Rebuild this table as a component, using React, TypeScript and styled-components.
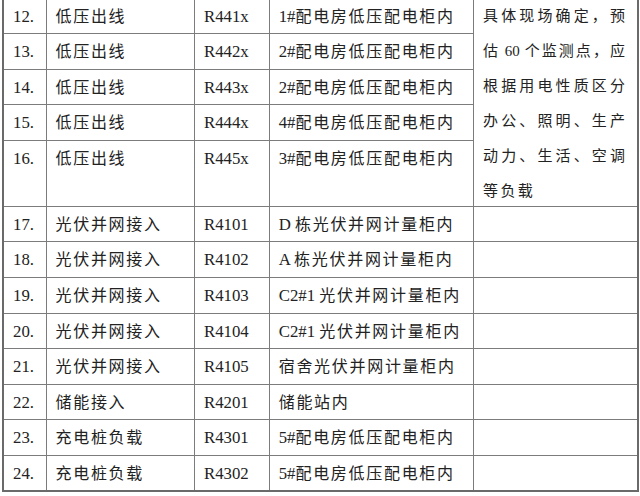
import React from "react";
import styled, { createGlobalStyle } from "styled-components";

const GlobalStyle = createGlobalStyle`
  html, body {
    margin: 0;
    padding: 0;
    background: #ffffff;
    overflow: hidden;
  }
  body {
    font-family: "Liberation Serif", "Noto Sans CJK SC", serif;
    color: #222222;
  }
`;

const Sheet = styled.table`
  border-collapse: collapse;
  table-layout: fixed;
  width: 635px;
  margin: -3px 0 0 2px;
  border: 2px solid #6a6a6a;
  font-family: "Liberation Serif", "Noto Sans CJK SC", serif;
  font-size: 16px;
  color: #222222;
`;

const Row = styled.tr<{ $tall?: boolean }>`
  height: ${(p) => (p.$tall ? "66px" : "35.6px")};
`;

const Cell = styled.td<{ $code?: boolean }>`
  border: 1px solid #7c7c7c;
  padding: 1px 4px 0 9px;
  vertical-align: top;
  line-height: 33px;
  white-space: nowrap;
  overflow: hidden;
  font-size: ${(p) => (p.$code ? "16.8px" : "16px")};
  letter-spacing: ${(p) => (p.$code ? "0" : "1.7px")};
`;

const NoteCell = styled.td`
  border: 1px solid #7c7c7c;
  padding: 0 12px 0 9px;
  vertical-align: top;
  line-height: 35px;
  font-size: 15px;
  word-spacing: -1px;
`;

const NoteLine = styled.span<{ $last?: boolean }>`
  display: block;
  height: ${(p) => (p.$last ? "30px" : "35.1px")};
  text-align: ${(p) => (p.$last ? "left" : "justify")};
  text-align-last: ${(p) => (p.$last ? "left" : "justify")};
  letter-spacing: ${(p) => (p.$last ? "2.4px" : "0")};
`;

const Latin = styled.span`
  letter-spacing: 0;
  font-size: 16.8px;
`;

type Item = { no: string; name: string; code: string; pre?: string; loc: string };

const rows: Item[] = [
  { no: "12.", name: "低压出线", code: "R441x", pre: "1#", loc: "配电房低压配电柜内" },
  { no: "13.", name: "低压出线", code: "R442x", pre: "2#", loc: "配电房低压配电柜内" },
  { no: "14.", name: "低压出线", code: "R443x", pre: "2#", loc: "配电房低压配电柜内" },
  { no: "15.", name: "低压出线", code: "R444x", pre: "4#", loc: "配电房低压配电柜内" },
  { no: "16.", name: "低压出线", code: "R445x", pre: "3#", loc: "配电房低压配电柜内" },
  { no: "17.", name: "光伏并网接入", code: "R4101", pre: "D ", loc: "栋光伏并网计量柜内" },
  { no: "18.", name: "光伏并网接入", code: "R4102", pre: "A ", loc: "栋光伏并网计量柜内" },
  { no: "19.", name: "光伏并网接入", code: "R4103", pre: "C2#1 ", loc: "光伏并网计量柜内" },
  { no: "20.", name: "光伏并网接入", code: "R4104", pre: "C2#1 ", loc: "光伏并网计量柜内" },
  { no: "21.", name: "光伏并网接入", code: "R4105", loc: "宿舍光伏并网计量柜内" },
  { no: "22.", name: "储能接入", code: "R4201", loc: "储能站内" },
  { no: "23.", name: "充电桩负载", code: "R4301", pre: "5#", loc: "配电房低压配电柜内" },
  { no: "24.", name: "充电桩负载", code: "R4302", pre: "5#", loc: "配电房低压配电柜内" },
];

const note = [
  "具体现场确定，预",
  "估 60 个监测点，应",
  "根据用电性质区分",
  "办公、照明、生产",
  "动力、生活、空调",
  "等负载",
];

export default function App() {
  return (
    <>
      <GlobalStyle />
      <Sheet>
        <colgroup>
          <col style={{ width: 43 }} />
          <col style={{ width: 148.5 }} />
          <col style={{ width: 74.7 }} />
          <col style={{ width: 204.3 }} />
          <col style={{ width: 164.5 }} />
        </colgroup>
        <tbody>
          {rows.map((r, i) => (
            <Row key={r.no} $tall={i === 4}>
              <Cell $code>{r.no}</Cell>
              <Cell>{r.name}</Cell>
              <Cell $code>{r.code}</Cell>
              <Cell>
                {r.pre && <Latin>{r.pre}</Latin>}
                {r.loc}
              </Cell>
              {i === 0 && (
                <NoteCell rowSpan={5}>
                  {note.map((line, j) => (
                    <NoteLine key={line} $last={j === note.length - 1}>
                      {line}
                    </NoteLine>
                  ))}
                </NoteCell>
              )}
              {i > 4 && <Cell />}
            </Row>
          ))}
        </tbody>
      </Sheet>
    </>
  );
}
